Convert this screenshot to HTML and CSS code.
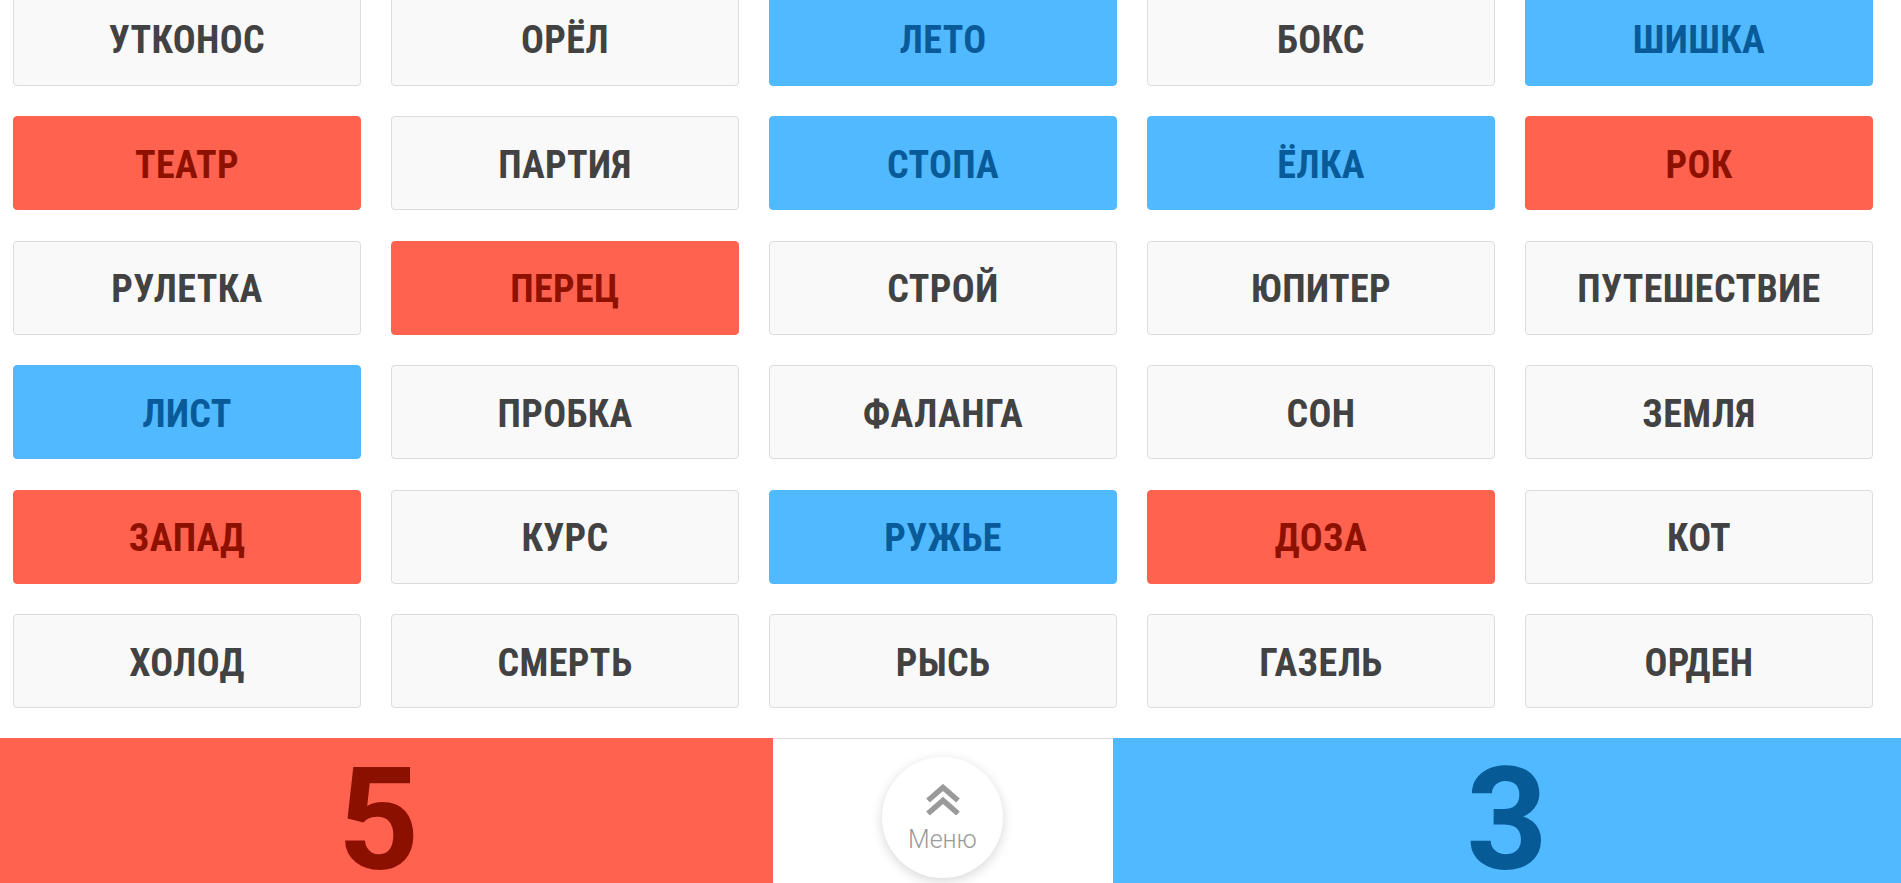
FILE: index.html
```html
<!DOCTYPE html>
<html lang="ru">
<head>
<meta charset="utf-8">
<title>Слова</title>
<link rel="stylesheet" href="styles.css">
</head>
<body>
<main class="board">
  <div class="card">УТКОНОС</div>
  <div class="card">ОРЁЛ</div>
  <div class="card blue">ЛЕТО</div>
  <div class="card">БОКС</div>
  <div class="card blue">ШИШКА</div>

  <div class="card red">ТЕАТР</div>
  <div class="card">ПАРТИЯ</div>
  <div class="card blue">СТОПА</div>
  <div class="card blue">ЁЛКА</div>
  <div class="card red">РОК</div>

  <div class="card">РУЛЕТКА</div>
  <div class="card red">ПЕРЕЦ</div>
  <div class="card">СТРОЙ</div>
  <div class="card">ЮПИТЕР</div>
  <div class="card">ПУТЕШЕСТВИЕ</div>

  <div class="card blue">ЛИСТ</div>
  <div class="card">ПРОБКА</div>
  <div class="card">ФАЛАНГА</div>
  <div class="card">СОН</div>
  <div class="card">ЗЕМЛЯ</div>

  <div class="card red">ЗАПАД</div>
  <div class="card">КУРС</div>
  <div class="card blue">РУЖЬЕ</div>
  <div class="card red">ДОЗА</div>
  <div class="card">КОТ</div>

  <div class="card">ХОЛОД</div>
  <div class="card">СМЕРТЬ</div>
  <div class="card">РЫСЬ</div>
  <div class="card">ГАЗЕЛЬ</div>
  <div class="card">ОРДЕН</div>
</main>
<footer class="scorebar">
  <div class="score score-red">5</div>
  <div class="middle">
    <button class="menu-btn" type="button">
      <svg class="menu-icon" width="36" height="33" viewBox="0 0 36 33" aria-hidden="true">
        <polyline points="3,16.5 18,3.5 33,16.5" fill="none" stroke="#9a9a9a" stroke-width="5.5"/>
        <polyline points="3,29.5 18,16.5 33,29.5" fill="none" stroke="#9a9a9a" stroke-width="5.5"/>
      </svg>
      <span class="menu-label">Меню</span>
    </button>
  </div>
  <div class="score score-blue">3</div>
</footer>
</body>
</html>
```
FILE: styles.css
```css
html, body {
  margin: 0;
  padding: 0;
  height: 100%;
  overflow: hidden;
  background: #ffffff;
}

body {
  font-family: "Roboto Condensed", Roboto, "Liberation Sans", sans-serif;
}

.board {
  display: grid;
  grid-template-columns: repeat(5, 348px);
  grid-auto-rows: 94px;
  column-gap: 30px;
  row-gap: 30.5px;
  padding-left: 13px;
  margin-top: -8.5px;
}

.card {
  display: flex;
  align-items: center;
  justify-content: center;
  box-sizing: border-box;
  border: 1px solid #dcdcdc;
  border-radius: 4px;
  background: #f9f9f9;
  color: #424242;
  font-family: Roboto, "Liberation Sans", sans-serif;
  font-stretch: condensed;
  font-weight: 700;
  font-size: 38px;
  letter-spacing: 0.4px;
  padding-top: 3px;
}

.card.red {
  background: #ff6350;
  border-color: #ff6350;
  color: #8e1100;
}

.card.blue {
  background: #51b9ff;
  border-color: #51b9ff;
  color: #085b98;
}

.scorebar {
  display: grid;
  grid-template-columns: 773px 340px 1fr;
  height: 145px;
  margin-top: 30px;
}

.score {
  font-family: Roboto, "Liberation Sans", sans-serif;
  font-weight: 700;
  font-size: 142px;
  line-height: 1;
  text-align: center;
  padding-top: 12px;
}

.score-red {
  background: #ff6350;
  color: #8c1000;
  padding-right: 16px;
}

.score-blue {
  background: #51b9ff;
  color: #065a96;
}

.middle {
  border-top: 1px solid #dddddd;
  display: flex;
  justify-content: center;
  align-items: flex-start;
  padding-top: 18px;
  background: #ffffff;
}

.menu-btn {
  width: 121px;
  height: 121px;
  border-radius: 50%;
  border: none;
  background: #ffffff;
  box-shadow: 0 3px 12px rgba(0, 0, 0, 0.16);
  display: flex;
  flex-direction: column;
  align-items: center;
  padding: 27px 0 0;
  margin-left: -1px;
}

.menu-icon {
  display: block;
}

.menu-label {
  font-family: Roboto, "Liberation Sans", sans-serif;
  font-weight: 300;
  font-size: 25px;
  line-height: 1;
  color: #9a9a9a;
  margin-top: 10px;
}
```
